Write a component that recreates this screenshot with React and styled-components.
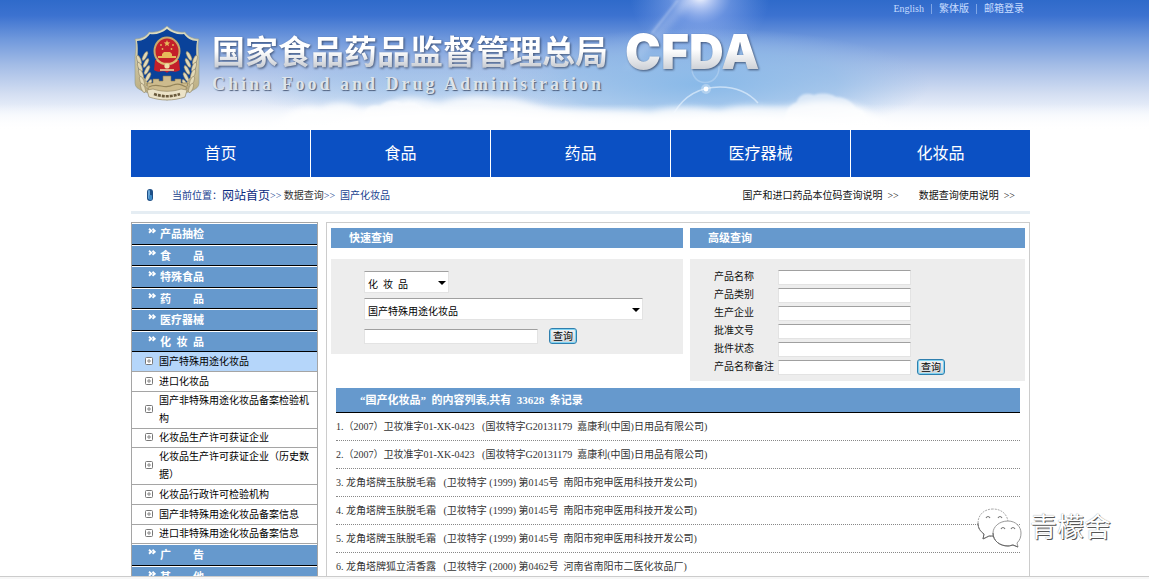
import React from 'react';
import styled, { createGlobalStyle } from 'styled-components';

const navItems = ['首页', '食品', '药品', '医疗器械', '化妆品'];

const topCategories = [
  '产品抽检',
  '食\u3000\u3000品',
  '特殊食品',
  '药\u3000\u3000品',
  '医疗器械',
  '化\u2002妆\u2002品',
];

const cosmeticsItems = [
  '国产特殊用途化妆品',
  '进口化妆品',
  '国产非特殊用途化妆品备案检验机构',
  '化妆品生产许可获证企业',
  '化妆品生产许可获证企业（历史数据）',
  '化妆品行政许可检验机构',
  '国产非特殊用途化妆品备案信息',
  '进口非特殊用途化妆品备案信息',
];

const bottomCategories = ['广\u3000\u3000告', '其\u3000\u3000他'];

const advancedFields = [
  { id: 'name', label: '产品名称' },
  { id: 'type', label: '产品类别' },
  { id: 'company', label: '生产企业' },
  { id: 'approval', label: '批准文号' },
  { id: 'status', label: '批件状态' },
  { id: 'remark', label: '产品名称备注' },
];

const records = [
  '1.（2007）卫妆准字01-XK-0423\u2002 (国妆特字G20131179\u2002嘉康利(中国)日用品有限公司)',
  '2.（2007）卫妆准字01-XK-0423\u2002 (国妆特字G20131179\u2002嘉康利(中国)日用品有限公司)',
  '3. 龙角塔牌玉肤脱毛霜\u2002 (卫妆特字 (1999) 第0145号\u2002南阳市宛申医用科技开发公司)',
  '4. 龙角塔牌玉肤脱毛霜\u2002 (卫妆特字 (1999) 第0145号\u2002南阳市宛申医用科技开发公司)',
  '5. 龙角塔牌玉肤脱毛霜\u2002 (卫妆特字 (1999) 第0145号\u2002南阳市宛申医用科技开发公司)',
  '6. 龙角塔牌狐立清香露\u2002 (卫妆特字 (2000) 第0462号\u2002河南省南阳市二医化妆品厂)',
];

const SkyArt = () => (
  <SkySvg viewBox="0 0 1149 130" preserveAspectRatio="xMidYMin slice" aria-hidden="true">
    <defs>
      <linearGradient id="sky" x1="0" y1="0" x2="0" y2="1">
        <stop offset="0" stopColor="#2f6aca" />
        <stop offset="0.12" stopColor="#3c72d0" />
        <stop offset="0.3" stopColor="#6f98dc" />
        <stop offset="0.5" stopColor="#a3bce6" />
        <stop offset="0.72" stopColor="#d3def2" />
        <stop offset="0.88" stopColor="#f1f5fc" />
        <stop offset="1" stopColor="#fff" />
      </linearGradient>
      <radialGradient id="deep">
        <stop offset="0" stopColor="#86b8e8" stopOpacity="0.95" />
        <stop offset="0.6" stopColor="#8fbbe8" stopOpacity="0.65" />
        <stop offset="1" stopColor="#9cc0ea" stopOpacity="0" />
      </radialGradient>
      <radialGradient id="sun">
        <stop offset="0" stopColor="#fff" />
        <stop offset="0.15" stopColor="#dfe6ff" stopOpacity="0.8" />
        <stop offset="0.45" stopColor="#a9c0f7" stopOpacity="0.4" />
        <stop offset="1" stopColor="#8fb0f0" stopOpacity="0" />
      </radialGradient>
      <linearGradient id="fade" x1="0" y1="0" x2="0" y2="1">
        <stop offset="0" stopColor="#fff" stopOpacity="0" />
        <stop offset="1" stopColor="#fff" />
      </linearGradient>
      <filter id="soft" x="-10%" y="-50%" width="120%" height="200%">
        <feGaussianBlur stdDeviation="3" />
      </filter>
      <filter id="crisp" x="-10%" y="-50%" width="120%" height="200%">
        <feGaussianBlur stdDeviation="1" />
      </filter>
    </defs>
    <rect width="1149" height="130" fill="url(#sky)" />
    <ellipse cx="700" cy="84" rx="230" ry="56" fill="url(#deep)" />
    <ellipse cx="410" cy="88" rx="170" ry="30" fill="url(#deep)" opacity="0.5" />
    <ellipse cx="700" cy="-4" rx="70" ry="62" fill="url(#sun)" />
    <path d="M682 0 L656 26 L624 72 L664 34 L694 0 Z" fill="#fff" opacity="0.2" filter="url(#soft)" />
    <path d="M678 0 L652 33" stroke="#fff" strokeWidth="1.5" opacity="0.35" filter="url(#crisp)" />
    <g fill="#fff">
      <path
        filter="url(#soft)"
        opacity="0.8"
        d="M270 132 C290 108 305 104 320 108 C335 100 350 102 360 108 C376 106 388 104 394 100
        C410 94 424 100 440 102 C460 96 480 94 496 98 C516 96 530 104 550 108 C590 112 620 108 650 112
        C680 104 700 108 720 110 C745 102 770 108 790 106 C810 98 850 98 870 112 L900 132 Z"
      />
      <path
        filter="url(#crisp)"
        opacity="0.55"
        d="M360 130 C362 106 372 104 380 106 C386 100 396 99 402 104 C412 100 420 104 426 110 C440 106 446 112 452 130 Z
        M784 130 C784 108 792 104 797 102 C798 95 806 92 814 95 C822 92 832 94 836 97 C846 97 852 102 856 108
        C864 110 868 116 870 130 Z"
      />
      <path filter="url(#soft)" d="M300 134 C360 112 420 110 480 112 C540 114 600 120 660 118 C720 114 800 112 880 134 Z" />
    </g>
    <g fill="none" stroke="#eef7ff">
      <path d="M674 113 C684 96 700 87 720 87 C738 87 750 94 758 103" strokeWidth="1.5" opacity="0.6" />
      <path d="M692 66 C690 88 720 88 719 66" strokeWidth="1.5" opacity="0.25" />
    </g>
    <circle cx="706" cy="89" r="5" fill="#fff" opacity="0.3" />
    <circle cx="706" cy="89" r="2.4" fill="#fff" />
    <rect y="104" width="1149" height="26" fill="url(#fade)" />
  </SkySvg>
);

const Emblem = () => (
  <svg width="68" height="76" viewBox="0 0 68 76" role="img" aria-label="国徽">
    <defs>
      <linearGradient id="gold" x1="0" y1="0" x2="0" y2="1">
        <stop offset="0" stopColor="#dfe0c8" />
        <stop offset="1" stopColor="#b9a878" />
      </linearGradient>
    </defs>
    <path
      d="M34 1 C39 6 46 8 52 7 C54 11 60 14 66 14 C64 21 66 27 66 34 V58 C66 66 54 66 46 71 L34 75 L22 71
      C14 66 2 66 2 58 V34 C2 27 4 21 2 14 C8 14 14 11 16 7 C22 8 29 6 34 1 Z"
      fill="url(#gold)"
      stroke="#8f9a90"
      strokeWidth="0.6"
    />
    <path
      d="M34 4 C39 8 45 10 51 9 C54 13 58 16 64 16 C62 26 65 36 62 46 L50 62 H18 L6 46 C3 36 6 26 4 16
      C10 16 14 13 17 9 C23 10 29 8 34 4 Z"
      fill="#0a429a"
    />
    <g fill="#e3d9b6" stroke="#85795a" strokeWidth="0.5">
      {[0, 1, 2, 3, 4].map((i) => (
        <g key={i}>
          <ellipse cx={6 + i} cy={35 + i * 7} rx="1.9" ry="5" transform={`rotate(-22 ${6 + i} ${35 + i * 7})`} />
          <ellipse cx={12 + i} cy={31 + i * 7} rx="1.8" ry="5" transform={`rotate(28 ${12 + i} ${31 + i * 7})`} />
          <ellipse cx={62 - i} cy={35 + i * 7} rx="1.9" ry="5" transform={`rotate(22 ${62 - i} ${35 + i * 7})`} />
          <ellipse cx={56 - i} cy={31 + i * 7} rx="1.8" ry="5" transform={`rotate(-28 ${56 - i} ${31 + i * 7})`} />
        </g>
      ))}
    </g>
    <path d="M22 35 L46 35 L47 45 C42 49 38 44 34 48 C30 44 26 49 21 45 Z" fill="#c4202a" />
    <ellipse cx="34" cy="26" rx="12.5" ry="13.5" fill="#c4202a" stroke="#c9a86c" strokeWidth="2" />
    <g fill="#e6b95a">
      <path d="M34 15 L34.9 17.2 L37.2 17.4 L35.4 18.9 L36 21.2 L34 20 L32 21.2 L32.6 18.9 L30.8 17.4 L33.1 17.2 Z" />
      <circle cx="28" cy="20" r="0.9" />
      <circle cx="40" cy="20" r="0.9" />
      <circle cx="29.5" cy="24" r="0.9" />
      <circle cx="38.5" cy="24" r="0.9" />
      <path d="M29 29 L31 27 H37 L39 29 V31 H43 V33 H25 V31 H29 Z" />
    </g>
    <path d="M24 35 C28 40 40 40 44 35" fill="none" stroke="#e2bd72" strokeWidth="2" />
    <circle cx="34" cy="41" r="2.6" fill="#f0dfa8" />
    <path d="M27 45 H41" stroke="#e9d3a0" strokeWidth="1.6" />
    <path
      d="M14 58 H20 V54 H26 V56 H30 V51 H38 V56 H42 V54 H48 V58 H55 L52 67 H16 Z"
      fill="#cdbb8d"
      stroke="#887748"
      strokeWidth="0.6"
    />
    <path d="M16 62 C25 57 31 65 40 60 C46 58 49 60 53 62" fill="none" stroke="#94845a" strokeWidth="1.2" />
    <path d="M14 65 L20 64 C29 67 39 67 48 64 L54 65 L52 72 C40 76 28 76 16 72 Z" fill="#ece3c8" stroke="#978a66" strokeWidth="0.7" />
    <path d="M21 69 C30 72 38 72 47 69" fill="none" stroke="#6a5a3c" strokeWidth="2.6" strokeDasharray="3 1" />
  </svg>
);

const DoubleArrow = () => (
  <svg width="8" height="6" viewBox="0 0 8 6" aria-hidden="true">
    <path d="M1 0.8 L3.3 2.8 L1 4.8 M4.5 0.8 L6.8 2.8 L4.5 4.8" fill="none" stroke="#fff" strokeWidth="1.8" />
  </svg>
);

const PlusBox = () => (
  <svg width="8" height="8" viewBox="0 0 8 8" aria-hidden="true">
    <rect x="0.5" y="0.5" width="7" height="7" rx="1" fill="#fff" stroke="#777" />
    <path d="M2 4 H6 M4 2 V6" stroke="#888" />
  </svg>
);

const Pill = () => (
  <svg width="6" height="12" viewBox="0 0 6 12" aria-hidden="true">
    <rect width="6" height="12" rx="3" fill="#1d4f86" />
    <rect x="1" y="1" width="2" height="9" rx="1" fill="#6aa5d6" />
    <rect x="2" y="6" width="3" height="5" rx="1" fill="#3f8cc8" />
  </svg>
);

const Bubbles = () => (
  <svg width="46" height="40" viewBox="0 0 46 40" aria-hidden="true">
    <g fill="#fff" stroke="#aaa" strokeWidth="1">
      <path
        d="M16 1 C7 1 1 7 1 15 C1 20 3 23 7 26 L6 31 L12 28 C20 30 31 25 31 15 C31 7 25 1 16 1 Z"
        strokeDasharray="2 1"
      />
      <path
        d="M31 13 C22 13 16 19 16 25 C16 33 23 38 31 38 C33 38 35 37 36 37 L41 39 L40 35 C43 32 44 29 44 25 C44 19 39 13 31 13 Z"
        stroke="#999"
      />
      <path d="M1 15 C1 20 3 23 7 26 L6 31 L12 28 H16 M16 25 C16 33 23 38 31 38 C33 38 35 37 36 37 L41 39" fill="none" stroke="#666" />
    </g>
    <path d="M9 10 Q11 7 13 10 M21 10 Q23 7 25 10 M24 21 Q26 18 28 21 M34 21 Q36 18 38 21" fill="none" stroke="#777" strokeWidth="1.2" />
  </svg>
);

const CategoryHead = ({ children }) => (
  <Category>
    <CategoryLink href="#">
      <DoubleArrow />
      <span>{children}</span>
    </CategoryLink>
  </Category>
);

const App = () => {
  return (
    <Page>
      <GlobalStyle />
      <Screen>
        <Header>
          <SkyArt />
          <Wrap>
            <TopLinks>
              <a href="#">English</a>
              <a href="#">繁体版</a>
              <a href="#">邮箱登录</a>
            </TopLinks>
            <Brand>
              <Emblem />
              <BrandText>
                <BrandName>国家食品药品监督管理总局</BrandName>
                <BrandEnglish>China Food and Drug Administration</BrandEnglish>
              </BrandText>
              <Logotype>CFDA</Logotype>
            </Brand>
          </Wrap>
        </Header>

        <Wrap>
          <Nav>
            {navItems.map((item) => (
              <a href="#" key={item}>{item}</a>
            ))}
          </Nav>

          <Crumbs>
            <Pill />
            <CrumbPath>
              <span>当前位置：</span>
              <HomeLink href="#">网站首页</HomeLink>
              <span>&gt;&gt;&nbsp;</span>
              <DarkLink href="#">数据查询</DarkLink>
              <span>&gt;&gt;&nbsp;&nbsp;国产化妆品</span>
            </CrumbPath>
            <CrumbHelp>
              <a href="#">国产和进口药品本位码查询说明&nbsp;&nbsp;&gt;&gt;</a>
              <a href="#">数据查询使用说明&nbsp;&nbsp;&gt;&gt;</a>
            </CrumbHelp>
          </Crumbs>

          <Columns>
            <Sidebar>
              <CategoryList>
                {topCategories.map((item) => (
                  <CategoryHead key={item}>{item}</CategoryHead>
                ))}
              </CategoryList>
              <SubList>
                {cosmeticsItems.map((item, i) => (
                  <SubItem key={item} $active={i === 0}>
                    <PlusBox />
                    <a href="#">{item}</a>
                  </SubItem>
                ))}
              </SubList>
              <CategoryList>
                {bottomCategories.map((item) => (
                  <CategoryHead key={item}>{item}</CategoryHead>
                ))}
              </CategoryList>
            </Sidebar>

            <Content>
              <SearchRow>
                <section>
                  <PanelTitle>快速查询</PanelTitle>
                  <QuickForm onSubmit={(e) => e.preventDefault()}>
                    <SelectBox $width={85}>
                      <select aria-label="类别" defaultValue="a">
                        <option value="a">{'化\u2002妆\u2002品'}</option>
                      </select>
                    </SelectBox>
                    <SelectBox $width={279}>
                      <select aria-label="数据库" defaultValue="a">
                        <option value="a">国产特殊用途化妆品</option>
                      </select>
                    </SelectBox>
                    <QuickLine>
                      <TextBox $width={174} type="text" aria-label="关键字" />
                      <QueryButton type="submit">查询</QueryButton>
                    </QuickLine>
                  </QuickForm>
                </section>
                <section>
                  <PanelTitle>高级查询</PanelTitle>
                  <AdvancedForm onSubmit={(e) => e.preventDefault()}>
                    <FieldGrid>
                      {advancedFields.map((field) => (
                        <Field key={field.id}>
                          <label htmlFor={field.id}>{field.label}</label>
                          <TextBox $width={133} type="text" id={field.id} />
                        </Field>
                      ))}
                    </FieldGrid>
                    <QueryButton type="submit">查询</QueryButton>
                  </AdvancedForm>
                </section>
              </SearchRow>

              <Results>
                <ResultsTitle>{'“国产化妆品”\u2002的内容列表,共有\u200233628\u2002条记录'}</ResultsTitle>
                <RecordList>
                  {records.map((record) => (
                    <li key={record}>
                      <a href="#">{record}</a>
                    </li>
                  ))}
                </RecordList>
              </Results>
            </Content>
          </Columns>
        </Wrap>
      </Screen>
      <BottomEdge />
      <Watermark>
        <Bubbles />
        <span>青檬舍</span>
      </Watermark>
    </Page>
  );
};

const GlobalStyle = createGlobalStyle`
  * {
    box-sizing: border-box;
  }

  body {
    margin: 0;
    background: #fff;
    color: #111;
    font-family: "Liberation Serif", "Noto Sans CJK SC", serif;
    font-size: 10px;
    line-height: 18px;
  }

  a {
    color: inherit;
    text-decoration: none;
  }

  h1, h2, p, ul, ol {
    margin: 0;
    padding: 0;
    list-style: none;
  }

  svg {
    flex: none;
  }
`;

const Page = styled.div`
  height: 100vh;
  display: flex;
  flex-direction: column;
  position: relative;
`;

const Screen = styled.div`
  flex: 1;
  min-height: 0;
  overflow: hidden;
`;

const BottomEdge = styled.div`
  height: 3px;
  border-top: 1px solid #ccc;
  background: #f7f7f7;
`;

const Wrap = styled.div`
  position: relative;
  max-width: 899px;
  margin: 0 auto;
  left: 6px;
`;

const Header = styled.header`
  position: relative;
  height: 130px;
`;

const SkySvg = styled.svg`
  position: absolute;
  inset: 0;
  width: 100%;
  height: 130px;
`;

const TopLinks = styled.div`
  display: flex;
  justify-content: flex-end;
  align-items: center;
  height: 18px;
  padding-right: 6px;
  color: #c6dcff;
  line-height: 10px;

  a + a {
    margin-left: 7px;
    padding-left: 7px;
    border-left: 1px solid #7fa6e6;
  }
`;

const Brand = styled.div`
  display: flex;
  align-items: flex-start;
  padding: 7px 0 0 2px;
`;

const metal = `
  color: transparent;
  background: linear-gradient(#fff 45%, #c3c7ce 90%);
  background-clip: text;
  -webkit-background-clip: text;
  filter: drop-shadow(1px 1px 1px rgba(45, 60, 90, 0.8));
`;

const BrandText = styled.div`
  padding: 8px 0 0 11px;
`;

const BrandName = styled.h1`
  ${metal}
  font-size: 33px;
  line-height: 40px;
  font-weight: 700;
  white-space: nowrap;
`;

const BrandEnglish = styled.p`
  color: #dde3ea;
  font-size: 18px;
  line-height: 22px;
  font-weight: 700;
  letter-spacing: 3px;
  white-space: nowrap;
  text-shadow: 1px 1px 1px rgba(50, 65, 95, 0.8);
`;

const Logotype = styled.div`
  ${metal}
  margin-left: 17px;
  font-family: Inter, sans-serif;
  font-size: 48px;
  line-height: 54px;
  font-weight: 900;
`;

const Nav = styled.nav`
  display: grid;
  grid-template-columns: repeat(5, 1fr);
  gap: 1px;

  a {
    height: 47px;
    background: #0b50c3;
    color: #fff;
    font-size: 16px;
    line-height: 48px;
    text-align: center;
  }
`;

const Crumbs = styled.div`
  display: flex;
  align-items: center;
  height: 37px;
  padding: 4px 15px 0 16px;
  border-bottom: 3px solid #e5edf3;

  svg {
    margin-bottom: 2px;
  }
`;

const CrumbPath = styled.div`
  display: flex;
  align-items: center;
  margin-left: 19px;
  color: #173f8f;
`;

const HomeLink = styled.a`
  font-size: 12px;
  color: #0a2a80;
`;

const DarkLink = styled.a`
  color: #333;
`;

const CrumbHelp = styled.div`
  display: flex;
  gap: 20px;
  margin-left: auto;
`;

const Columns = styled.div`
  display: flex;
  align-items: flex-start;
  gap: 8px;
  padding-top: 8px;
`;

const Sidebar = styled.aside`
  width: 187px;
  flex: none;
  border: 1px solid #a5a5a5;
`;

const CategoryList = styled.ul`
  li:nth-child(even) {
    height: 21px;
  }
`;

const Category = styled.li`
  height: 22px;
  padding-top: 1px;
  border-bottom: 1px solid #000;
`;

const CategoryLink = styled.a`
  display: flex;
  align-items: center;
  gap: 4px;
  height: 100%;
  padding-left: 16px;
  background: #6699cd;
  color: #fff;
  font-size: 11px;
  font-weight: 700;

  svg {
    margin-bottom: 6px;
  }
`;

const SubList = styled.ul`
  li:nth-child(4n) {
    min-height: 19px;
  }
`;

const SubItem = styled.li`
  display: flex;
  align-items: center;
  gap: 6px;
  min-height: 20px;
  padding: 0 8px 0 13px;
  border-bottom: 1px solid #a5a5a5;
  background: ${(props) => (props.$active ? '#b5d6fa' : '#fff')};
  color: #000;

  svg {
    margin-bottom: 2px;
  }
`;

const Content = styled.main`
  flex: 1;
  min-width: 0;
  min-height: 400px;
  padding: 5px 4px;
  border: 1px solid #ccc;
`;

const SearchRow = styled.div`
  display: grid;
  grid-template-columns: 352px 1fr;
  gap: 7px;
  align-items: start;
`;

const PanelTitle = styled.h2`
  height: 20px;
  margin-bottom: 11px;
  padding-left: 18px;
  background: #6699cd;
  color: #fff;
  font-size: 11px;
  line-height: 20px;
`;

const QuickForm = styled.form`
  display: flex;
  flex-direction: column;
  gap: 5px;
  padding: 12px 33px 10px;
  background: #ededed;
`;

const SelectBox = styled.div`
  position: relative;
  width: ${(props) => props.$width}px;

  select {
    display: block;
    width: 100%;
    height: 22px;
    padding: 6px 4px 0 3px;
    appearance: none;
    border: 1px solid #e3e3e3;
    border-top-color: #a0a0a0;
    border-radius: 0;
    background: #fff;
    color: #000;
    font: inherit;
    line-height: 14px;
  }

  &::after {
    content: '';
    position: absolute;
    top: 10px;
    right: 3px;
    border: 4px solid transparent;
    border-top-color: #000;
    border-bottom: 0;
    pointer-events: none;
  }
`;

const QuickLine = styled.div`
  display: flex;
  align-items: center;
  gap: 11px;
  padding-top: 3px;
`;

const TextBox = styled.input`
  width: ${(props) => props.$width}px;
  height: 15px;
  padding: 0 2px;
  border: 1px solid #e3e3e3;
  border-top-color: #a0a0a0;
  background: #fff;
  font: inherit;
`;

const QueryButton = styled.button`
  width: 28px;
  height: 16px;
  padding: 0;
  border: 1px solid #2f7fae;
  border-radius: 3px;
  background: linear-gradient(#f3f3f3, #cfd6da);
  box-shadow: inset 0 0 0 1px #7fd3f2;
  color: #000;
  font: inherit;
  line-height: 13px;
`;

const AdvancedForm = styled.form`
  display: flex;
  align-items: flex-end;
  gap: 6px;
  padding: 8px 24px 6px;
  background: #ededed;
`;

const FieldGrid = styled.div`
  display: grid;
`;

const Field = styled.div`
  display: grid;
  grid-template-columns: 64px auto;
  align-items: center;
  height: 18px;

  label {
    line-height: 20px;
  }
`;

const Results = styled.section`
  padding: 7px 5px 0;
`;

const ResultsTitle = styled.h2`
  height: 25px;
  padding-left: 24px;
  border-bottom: 1px solid #000;
  background: #6699cd;
  color: #fff;
  font-size: 11px;
  line-height: 24px;
`;

const RecordList = styled.ol`
  color: #333;

  li {
    height: 28px;
    border-bottom: 1px dotted #888;
    line-height: 28px;
    white-space: pre;
  }
`;

const Watermark = styled.div`
  position: absolute;
  right: 38px;
  bottom: 31px;
  display: flex;
  align-items: center;
  gap: 7px;
  color: #fff;
  font-size: 27px;
  line-height: 40px;
  text-shadow: 1px 1px 0 #555, 0 0 1px #888;
`;

export default App;
